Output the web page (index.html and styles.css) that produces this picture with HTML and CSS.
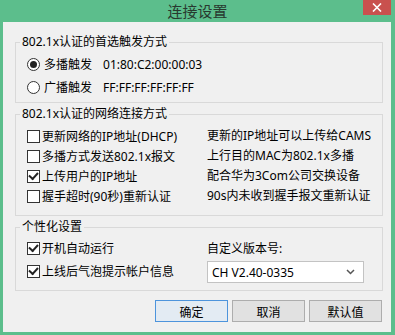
FILE: index.html
```html
<!DOCTYPE html>
<html lang="zh-CN">
  <head>
    <meta charset="UTF-8" />
    <title>连接设置</title>
    <link rel="stylesheet" href="styles.css">
  </head>
  <body>
    <div class="window">
      <div class="titlebar">
        <span class="title">连接设置</span>
        <span class="close">
          <svg width="10" height="9" viewBox="0 0 10 9">
            <path d="M1 0.5 L9 8.5 M9 0.5 L1 8.5" stroke="#fff" stroke-width="1.6" fill="none" />
          </svg>
        </span>
      </div>

      <div class="content">
        <fieldset class="group">
          <legend>802.1x认证的首选触发方式</legend>
          <div class="rows trigger">
            <div class="row">
              <span class="radio checked"></span>
              <span class="label">多播触发</span>
              <span class="mac">01:80:C2:00:00:03</span>
            </div>
            <div class="row">
              <span class="radio"></span>
              <span class="label">广播触发</span>
              <span class="mac">FF:FF:FF:FF:FF:FF</span>
            </div>
          </div>
        </fieldset>

        <fieldset class="group">
          <legend>802.1x认证的网络连接方式</legend>
          <div class="rows network">
            <div class="row"><span class="check"></span><span class="label">更新网络的IP地址(DHCP)</span></div>
            <div class="note">更新的IP地址可以上传给CAMS</div>
            <div class="row"><span class="check"></span><span class="label">多播方式发送802.1x报文</span></div>
            <div class="note">上行目的MAC为802.1x多播</div>
            <div class="row"><span class="check checked"></span><span class="label">上传用户的IP地址</span></div>
            <div class="note">配合华为3Com公司交换设备</div>
            <div class="row"><span class="check"></span><span class="label">握手超时(90秒)重新认证</span></div>
            <div class="note">90s内未收到握手报文重新认证</div>
          </div>
        </fieldset>

        <fieldset class="group">
          <legend>个性化设置</legend>
          <div class="rows personal">
            <div class="checks">
              <div class="row"><span class="check checked"></span><span class="label">开机自动运行</span></div>
              <div class="row"><span class="check checked"></span><span class="label">上线后气泡提示帐户信息</span></div>
            </div>
            <div class="version">
              <div class="row">自定义版本号:</div>
              <div class="select">
                <span>CH V2.40-0335</span>
                <svg width="9" height="6" viewBox="0 0 9 6">
                  <path d="M1 1 L4.5 4.5 L8 1" stroke="#555" stroke-width="1.5" fill="none" />
                </svg>
              </div>
            </div>
          </div>
        </fieldset>

        <div class="buttons">
          <button class="default">确定</button>
          <button>取消</button>
          <button>默认值</button>
        </div>
      </div>
    </div>
  </body>
</html>
```

FILE: styles.css
```css
body {
  margin: 0;
  font-family: "Noto Sans", "Noto Sans CJK SC", sans-serif;
  font-size: 12px;
  color: #000;
}

.window {
  width: 395px;
  height: 335px;
  background-color: #5cbe8c;
  display: flex;
  flex-direction: column;
  box-sizing: border-box;
  padding: 0 4px 3px 3px;
}

.titlebar {
  height: 22px;
  display: grid;
  grid-template-columns: 1fr auto 1fr;
  margin-left: -3px;
  margin-right: -4px;
}

.title {
  grid-column: 2;
  font-family: "Noto Sans CJK SC", sans-serif;
  font-size: 15px;
  line-height: 22px;
  color: #28392f;
}

.close {
  grid-column: 3;
  justify-self: end;
  align-self: start;
  width: 28px;
  height: 15px;
  margin-right: 4px;
  background-color: #c9514e;
  display: flex;
  align-items: center;
  justify-content: center;
}

.content {
  flex: 1;
  background-color: #f0f0f0;
  padding: 12px 8px 0 12px;
  display: flex;
  flex-direction: column;
}

.group {
  margin: 0 0 3px 0;
  padding: 0;
  border: 1px solid #d9d9d9;
  min-width: 0;
}

.group legend {
  margin-left: 4px;
  padding: 0 2px;
  line-height: 16px;
}

.rows {
  padding: 4px 0 5px 11px;
}

.row {
  height: 20px;
  display: flex;
  align-items: center;
  white-space: nowrap;
}

.trigger {
  display: flex;
  flex-direction: column;
  gap: 3px;
}

.trigger .label {
  margin-left: 2px;
}

.mac {
  margin-left: 11px;
}

.network {
  display: grid;
  grid-template-columns: 180px 1fr;
  grid-auto-rows: 20px;
  padding-bottom: 9px;
}

.note {
  line-height: 20px;
  white-space: nowrap;
}

.personal {
  display: grid;
  grid-template-columns: 180px 1fr;
  padding-top: 3px;
  padding-bottom: 7px;
}

.checks {
  display: flex;
  flex-direction: column;
  gap: 3px;
}

.version {
  display: flex;
  flex-direction: column;
  gap: 3px;
}

.select {
  width: 157px;
  height: 22px;
  box-sizing: border-box;
  border: 1px solid #c3c3c3;
  background-color: #fff;
  display: flex;
  align-items: center;
  justify-content: space-between;
  padding: 0 8px 0 4px;
}

.radio,
.check {
  width: 13px;
  height: 13px;
  box-sizing: border-box;
  border: 1px solid #333;
  background-color: #fff;
  margin-right: 2px;
  flex: none;
  display: flex;
  align-items: center;
  justify-content: center;
}

.radio {
  border-radius: 50%;
}

.radio.checked::after {
  content: "";
  width: 7px;
  height: 7px;
  border-radius: 50%;
  background-color: #222;
}

.check.checked::after {
  content: "";
  width: 7px;
  height: 4px;
  border-left: 2px solid #222;
  border-bottom: 2px solid #222;
  transform: translateY(-1px) rotate(-48deg);
}

.buttons {
  display: flex;
  justify-content: flex-end;
  gap: 4px;
  margin-top: 6px;
  padding-right: 1px;
}

button {
  width: 73px;
  height: 22px;
  font-family: "Noto Sans CJK SC", sans-serif;
  font-size: 12px;
  color: #000;
  background-color: #e1e1e1;
  border: 1px solid #adadad;
  padding: 0;
}

button.default {
  border-color: #4d94dc;
  background-color: #e3ebf3;
}
```
